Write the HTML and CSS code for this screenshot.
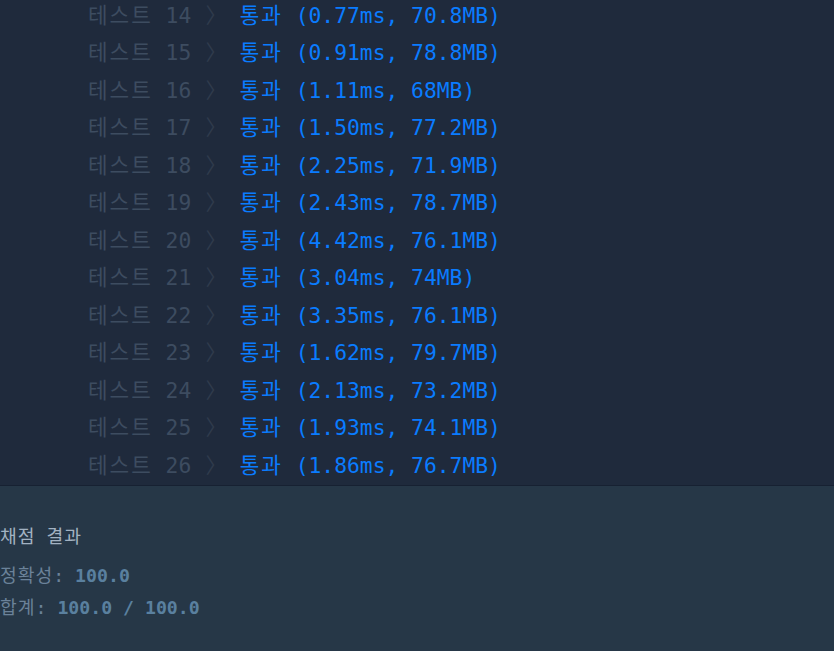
FILE: index.html
```html
<!DOCTYPE html>
<html lang="ko">
<head>
    <meta charset="UTF-8">
    <meta name="viewport" content="width=device-width, initial-scale=1.0">
    <title>실행 결과</title>
    <link rel="stylesheet" href="styles.css">
</head>
<body>
    <section class="console">
        <ul class="test-list" id="testList"></ul>
    </section>

    <section class="summary">
        <h2 class="summary-title"><span class="ko">채점</span> <span class="ko">결과</span></h2>
        <p class="score-line"><span class="score-label"><span class="ko">정확성</span>:</span> <span class="score-value">100.0</span></p>
        <p class="score-line"><span class="score-label"><span class="ko">합계</span>:</span> <span class="score-value">100.0 / 100.0</span></p>
    </section>

    <script>
        // Test results shown in the console
        const results = [
            [14, '0.77ms', '70.8MB'],
            [15, '0.91ms', '78.8MB'],
            [16, '1.11ms', '68MB'],
            [17, '1.50ms', '77.2MB'],
            [18, '2.25ms', '71.9MB'],
            [19, '2.43ms', '78.7MB'],
            [20, '4.42ms', '76.1MB'],
            [21, '3.04ms', '74MB'],
            [22, '3.35ms', '76.1MB'],
            [23, '1.62ms', '79.7MB'],
            [24, '2.13ms', '73.2MB'],
            [25, '1.93ms', '74.1MB'],
            [26, '1.86ms', '76.7MB']
        ];

        const testList = document.getElementById('testList');

        results.forEach(([num, time, mem]) => {
            const li = document.createElement('li');
            li.innerHTML =
                `<span class="test-name"><span class="ko">테스트</span> ${num}</span> <span class="arrow">〉</span> ` +
                `<span class="test-result"><span class="ko">통과</span> (${time}, ${mem})</span>`;
            testList.appendChild(li);
        });
    </script>
</body>
</html>
```

FILE: styles.css
```css
* {
    margin: 0;
    padding: 0;
    box-sizing: border-box;
}
html, body {
    height: 100%;
}
body {
    font-family: 'DejaVu Sans Mono', 'Noto Sans CJK KR', monospace;
    background-color: #263747;
    overflow: hidden;
    display: flex;
    flex-direction: column;
}
.console {
    background-color: #1f2a3c;
    border-bottom: 1px solid #172132;
    padding: 0 0 1px 88px;
    height: 486px;
    overflow: hidden;
    display: flex;
    flex-direction: column;
    justify-content: flex-end;
}
.test-list {
    list-style-type: none;
    font-size: 21.3px;
    white-space: pre;
}
.test-list li {
    line-height: 37.5px;
}
.test-list .ko {
    letter-spacing: 2px;
}
.test-name {
    color: #3d4c60;
}
.arrow {
    color: #2f3b4c;
    margin-left: 1.5px;
}
.test-result {
    color: #0a7cff;
}
.summary {
    flex: 1;
    padding-top: 37px;
    font-size: 18.2px;
}
.summary .ko {
    letter-spacing: 1px;
}
.summary-title {
    font-size: 18.2px;
    font-weight: normal;
    line-height: 28px;
    color: #a2b2c2;
    margin-bottom: 9px;
}
.score-line {
    line-height: 32px;
    white-space: pre;
}
.score-label {
    color: #6b8299;
}
.score-value {
    color: #5a809f;
    font-weight: bold;
}
```
